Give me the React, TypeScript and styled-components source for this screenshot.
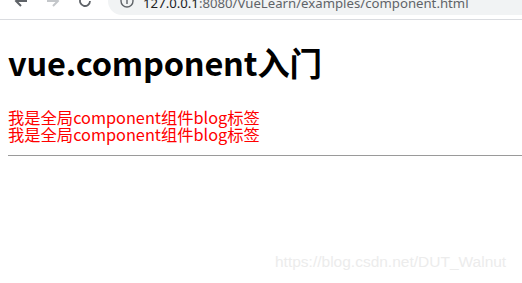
import React from "react";
import styled, { createGlobalStyle } from "styled-components";

const Global = createGlobalStyle`
  html, body { margin: 0; padding: 0; background: #fff; }
  body { width: 522px; height: 283px; overflow: hidden; position: relative; font-family: "Noto Sans CJK SC", "Noto Sans", sans-serif; }
`;

const Toolbar = styled.div`
  height: 19px;
  overflow: hidden;
  border-bottom: 1px solid #dadce0;
  background: #fff;
`;

const ToolbarRow = styled.div`
  height: 36px;
  margin-top: -17px;
  display: flex;
  align-items: center;
  padding-left: 5px;
`;

const NavButton = styled.div<{ $dim?: boolean }>`
  width: 32px;
  height: 28px;
  display: flex;
  align-items: center;
  justify-content: center;
  color: ${(p) => (p.$dim ? "#c4c7ca" : "#5f6368")};
`;

const Omnibox = styled.div`
  margin-left: 7px;
  flex: 1;
  height: 28px;
  border-radius: 14px 0 0 14px;
  background: #f1f3f4;
  display: flex;
  align-items: center;
  padding-left: 12px;
  gap: 9px;
`;

const Url = styled.span`
  font-family: "Noto Sans", sans-serif;
  font-size: 13.2px;
  color: #5f6368;
  white-space: nowrap;
  padding-top: 3px;
`;

const Host = styled.span`
  color: #202124;
`;

const Page = styled.main`
  padding: 0 0 0 8px;
`;

const Title = styled.h1`
  margin: 0;
  padding-top: 21px;
  height: 58px;
  box-sizing: border-box;
  font-family: "Noto Sans CJK SC", sans-serif;
  font-weight: 700;
  font-size: 32.5px;
  line-height: 42px;
  color: #000;
  letter-spacing: -0.2px;
  white-space: nowrap;
`;

const Lines = styled.div`
  padding-top: 31px;
`;

const BlogLine = styled.div`
  font-family: "Noto Sans CJK SC", sans-serif;
  font-size: 16.3px;
  line-height: 17px;
  color: #ff0000;
  white-space: nowrap;
`;

const Rule = styled.hr`
  margin: 12px 0 0 0;
  border: 0;
  border-top: 1px solid #9a9a9a;
  height: 0;
`;

const Watermark = styled.div`
  position: absolute;
  left: 275px;
  top: 253px;
  font-family: "Liberation Sans", Arial, sans-serif;
  font-size: 15.5px;
  color: #ececec;
  white-space: nowrap;
`;

const Back = () => (
  <svg width="16" height="16" viewBox="0 0 16 16" fill="none" stroke="currentColor" strokeWidth="2">
    <path d="M14 8H3M8 3L3 8l5 5" />
  </svg>
);
const Fwd = () => (
  <svg width="16" height="16" viewBox="0 0 16 16" fill="none" stroke="currentColor" strokeWidth="2">
    <path d="M2 8h11M8 3l5 5-5 5" />
  </svg>
);
const Reload = () => (
  <svg width="16" height="16" viewBox="0 0 16 16" fill="none" stroke="currentColor" strokeWidth="1.8">
    <path d="M13 8a5 5 0 1 1-1.5-3.6" />
    <path d="M12.5 1.5v3.5H9" />
  </svg>
);
const Info = () => (
  <svg width="14" height="14" viewBox="0 0 14 14" fill="none" stroke="#5f6368" strokeWidth="1.4">
    <circle cx="7" cy="7" r="6" />
    <path d="M7 6v4M7 4v0.8" />
  </svg>
);

export default function App() {
  return (
    <>
      <Global />
      <Toolbar>
        <ToolbarRow>
          <NavButton><Back /></NavButton>
          <NavButton $dim><Fwd /></NavButton>
          <NavButton><Reload /></NavButton>
          <Omnibox>
            <Info />
            <Url><Host>127.0.0.1</Host>:8080/VueLearn/examples/component.html</Url>
          </Omnibox>
        </ToolbarRow>
      </Toolbar>
      <Page>
        <Title>vue.component入门</Title>
        <Lines>
          <BlogLine>我是全局component组件blog标签</BlogLine>
          <BlogLine>我是全局component组件blog标签</BlogLine>
        </Lines>
        <Rule />
      </Page>
      <Watermark>https://blog.csdn.net/DUT_Walnut</Watermark>
    </>
  );
}
